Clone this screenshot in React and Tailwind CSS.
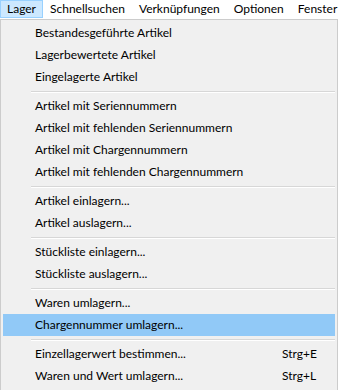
import React from "react";

const groups = [
  [
    { label: "Bestandesgeführte Artikel" },
    { label: "Lagerbewertete Artikel" },
    { label: "Eingelagerte Artikel" },
  ],
  [
    { label: "Artikel mit Seriennummern" },
    { label: "Artikel mit fehlenden Seriennummern" },
    { label: "Artikel mit Chargennummern" },
    { label: "Artikel mit fehlenden Chargennummern" },
  ],
  [{ label: "Artikel einlagern..." }, { label: "Artikel auslagern..." }],
  [{ label: "Stückliste einlagern..." }, { label: "Stückliste auslagern..." }],
  [{ label: "Waren umlagern..." }, { label: "Chargennummer umlagern...", active: true }],
  [
    { label: "Einzellagerwert bestimmen...", shortcut: "Strg+E" },
    { label: "Waren und Wert umlagern...", shortcut: "Strg+L" },
  ],
];

const menus = ["Lager", "Schnellsuchen", "Verknüpfungen", "Optionen", "Fenster"];

function Item({ label, shortcut, active }) {
  return (
    <div
      className={
        "flex h-[22px] items-center " + (active ? "bg-[#91c9f7]" : "")
      }
    >
      <span className="flex-1 pl-[32px] whitespace-nowrap">{label}</span>
      {shortcut ? (
        <span className="w-[53px] whitespace-nowrap">{shortcut}</span>
      ) : null}
    </div>
  );
}

export default function App() {
  return (
    <div
      className="w-[338px] h-[390px] overflow-hidden bg-[#f0f0f0] text-[12px] text-black"
      style={{ fontFamily: 'Lato, "Noto Sans", sans-serif' }}
    >
      <div className="flex h-[19px] bg-white">
        {menus.map((m, i) => (
          <div
            key={m}
            className={
              "flex h-[18px] items-center px-[6px] whitespace-nowrap " +
              (i === 0
                ? "border border-[#99d1ff] bg-[#cce8ff]"
                : "border border-transparent")
            }
          >
            {m}
          </div>
        ))}
      </div>
      <div className="h-[371px] border border-[#cccccc] border-b-0 px-[2px] pt-[2px]">
        {groups.map((g, gi) => (
          <div key={gi}>
            {gi > 0 ? (
              <div className="flex h-[7px] flex-col justify-center pl-[28px]">
                <div className="h-px bg-[#d7d7d7]" />
                <div className="h-px bg-white" />
              </div>
            ) : null}
            {g.map((it) => (
              <Item key={it.label} {...it} />
            ))}
          </div>
        ))}
      </div>
    </div>
  );
}
